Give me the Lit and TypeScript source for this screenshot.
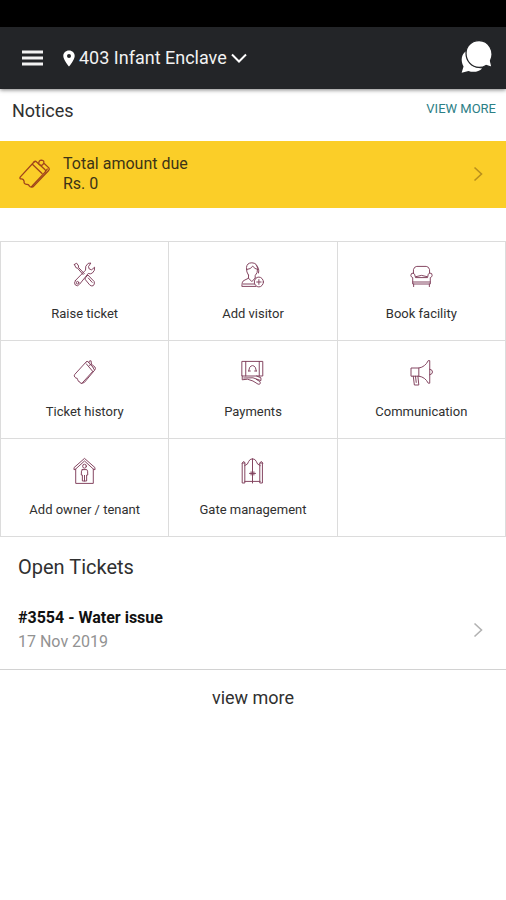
import { LitElement, html, css, svg } from "lit";
import { customElement } from "lit/decorators.js";

const ticket = svg`
  <path d="M13.6 2.8 L2 15.4 Q1.2 16.6 2.2 17.2 Q4.6 16.8 5.2 19.2 Q4.8 21.4 7.2 21.8 Q9 21.4 9.8 23.4 Q10.6 24.6 11.8 23.4 L23.2 11.2"/>
  <path d="M13.6 2.8 Q14.6 1.6 15.8 2.8 L22.8 9.2 Q24 10.4 23.2 11.2 M12.4 5 L20.4 12.6"/>
  <path d="M17.6 4.4 Q17.4 1.2 20 1.2 Q22.6 1.6 21.8 4 Q20.6 6.2 18.8 5.4 M22 3.8 L26.2 7.8 Q27 9 26 10 L13.4 23.2 Q12.6 24.2 11.4 24 M24.8 8.8 L23.6 10.4"/>`;

const steepTicket = svg`
  <path d="M15.4 2.8 L3 15.4 Q1.6 17 3.2 18.2 L4.2 19 Q6 18.8 6.2 20.8 L7 22.4 Q8.4 22.2 9 24 Q10 25 11.2 23.8 L22.4 12.4"/>
  <path d="M15.4 2.8 Q16.4 1.8 17.4 2.8 L22.4 8 M15.4 4.8 L22.2 12.2"/>
  <path d="M18 3.6 Q18.4 1 20.6 1.8 L21 5.2 L24.8 8 Q26 9.4 24.6 11 L13.4 23.4 L10.4 24.4 M18.6 6.4 L21 5.2 M22.4 8 L24 10.6"/>`;

const tiles = [
  {
    label: "Raise ticket",
    icon: svg`
      <path d="M2.5 3.5 L5 2.2 L7.2 5 L6.8 6.2 L13.4 12.8 M2.5 3.5 L4.4 6.8 L5.8 7 L12 13.6"/>
      <path d="M15.2 16 L17.2 14 L24 20.6 Q24.8 23.2 22.8 24.8 Q20.6 25.4 19 23.8 L14.2 18.4Z M17.6 17 L21.8 21.4"/>
      <path d="M3.8 19.4 L14.6 9.2 Q13.8 4.8 17.4 2.4 L20.4 2 L17.8 5.6 L18.6 8 L21.2 8.8 L24.4 6.2 Q25 9.8 22 12 Q19.6 13.6 17.6 12.4 L8.4 23 Q6 26 3.6 24 Q1.6 22 3.8 19.4Z"/>
      <circle cx="6" cy="21.7" r="1.3"/>`,
  },
  {
    label: "Add visitor",
    icon: svg`
      <path d="M9 14 Q6.8 11.4 7 6.6 Q7.4 1.8 12.8 1.8 Q18.6 2 19 7.4 Q19.2 12 16.4 14.6 V17"/>
      <path d="M7.2 8.6 Q11.6 8.2 13.8 5.2 Q16 8.2 19 8.4 M17.4 4.4 Q21.4 7 20 12"/>
      <path d="M9.2 14 V17.2 L3.6 19.8 Q2 21 2 25.4 H17 M9.2 17.2 L12.8 20.6 L16.4 17 M3.6 23 H15.6"/>
      <circle cx="20.4" cy="21" r="4.9"/>
      <path d="M20.4 18.6 V23.4 M18 21 H22.8"/>`,
  },
  {
    label: "Book facility",
    icon: svg`
      <path d="M4.8 12 V8.6 Q5.6 5.6 8.4 5.4 H18.6 Q21.4 5.6 22.2 8.6 V12"/>
      <path d="M4.8 12 Q1.8 11.8 2 14.4 Q2.2 16.2 4 16.6 V23 H23 V16.6 Q24.8 16.2 25 14.4 Q25.2 11.8 22.2 12 Q20.6 12.2 20 16.6 H7 Q6.4 12.2 4.8 12Z"/>
      <path d="M7.4 15.6 Q13.5 13 19.6 15.6 M4 21 H23 M5 23 V25.6 M22 23 V25.6"/>`,
  },
  { label: "Ticket history", icon: steepTicket },
  {
    label: "Payments",
    icon: svg`
      <path d="M2.4 2.4 H24.6 V17 H2.4Z M6.2 2.4 V17 M20.8 2.4 V17"/>
      <path d="M9.4 12 L10.4 8.4 Q13.5 4.8 16.6 8.4 L17.6 12 M9.4 12 H11.2 M15.8 12 H17.6"/>
      <path d="M2.4 17 V20.8 L8 20.2 L14 22 L19.6 25.2 Q22.8 25.6 21.6 22.6 L17.6 20.4 M4 19 L14 18.8 L22.6 21.6 V18.8 L18 17"/>`,
  },
  {
    label: "Communication",
    icon: svg`
      <path d="M2.6 9 H10.6 Q17.4 8 20.8 1.6 H22.4 V24.2 H20.8 Q17.4 18 10.6 17.2 H2.6Z"/>
      <path d="M10.6 9 V17.2 M22.4 10.2 Q25.4 10.6 25.4 13 Q25.2 15.4 22.4 15.8"/>
      <path d="M4.6 17.2 L5.8 26 H10.6 L9.6 17.2 M7 17.2 L7.8 23.4"/>`,
  },
  {
    label: "Add owner / tenant",
    icon: svg`
      <path d="M4 26 V12 L2.2 12.8 V10.6 L13.5 1.4 L24.8 10.6 V12.8 L23 12 V26Z M4 12 L13.5 4 L23 12"/>
      <circle cx="13.5" cy="9.2" r="2"/>
      <path d="M11 12.6 H16 Q17.2 13 17 18 H15.8 V24 H11.2 V18 H10 Q9.8 13 11 12.6Z M13.5 18.4 V24"/>`,
  },
  {
    label: "Gate management",
    icon: svg`
      <path d="M2.8 6 H5.2 V26 H2.8Z M21.8 6 H24.2 V26 H21.8Z M2.4 6 L4 4.4 L5.6 6 M21.4 6 L23 4.4 L24.6 6"/>
      <path d="M5.2 8.6 Q8.8 7.6 9.4 4.4 Q10.4 2 13.5 1.8 Q16.6 2 17.6 4.4 Q18.2 7.6 21.8 8.6 M13.5 1.8 V26 M5.2 24.4 H21.8"/>
      <path d="M10.2 16.4 H16.8 M12 14.8 V18 M15 14.8 V18"/>`,
  },
];

@customElement("app-root")
export class AppRoot extends LitElement {
  static styles = css`
    :host {
      display: block;
      min-height: 100vh;
      background: #fff;
      color: #303030;
      font-family: Roboto, "Liberation Sans", sans-serif;
    }
    * {
      box-sizing: border-box;
    }
    button {
      display: flex;
      align-items: center;
      padding: 0;
      border: 0;
      background: none;
      color: inherit;
      font: inherit;
      text-align: left;
      cursor: pointer;
    }
    svg {
      display: block;
      flex: none;
    }
    a {
      color: inherit;
      text-decoration: none;
    }
    h2,
    p {
      margin: 0;
      font-weight: 400;
    }
    .status {
      height: 27px;
      background: #000;
    }
    .bar {
      display: flex;
      align-items: center;
      height: 62px;
      padding: 0 12px 0 22px;
      background: #232528;
      color: #f2f2f2;
      box-shadow: 0 1px 4px rgba(0, 0, 0, 0.5);
    }
    .place {
      gap: 4px;
      margin-left: 20px;
      font-size: 18px;
      line-height: 24px;
    }
    .chat {
      margin-left: auto;
    }
    .notices {
      display: flex;
      justify-content: space-between;
      padding: 9px 10px 17px 12px;
      line-height: 26px;
    }
    .notices h2 {
      font-size: 18px;
    }
    .notices a {
      color: #2c8086;
      font-size: 13px;
      line-height: 22px;
    }
    .due {
      width: 100%;
      height: 67px;
      padding: 0 21px 2px 18px;
      background: #fbce28;
      color: #3d3416;
      font-size: 16px;
      line-height: 20px;
    }
    .due .text {
      flex: 1;
      margin-left: 12px;
    }
    .due .text span {
      display: block;
    }
    .chev {
      color: #b98f1c;
    }
    .tiles {
      display: grid;
      grid-template-columns: repeat(3, 1fr);
      gap: 1px;
      margin-top: 33px;
      padding: 1px;
      background: #dcdcdc;
    }
    .tile {
      flex-direction: column;
      gap: 17px;
      height: 98px;
      padding-top: 19px;
      background: #fff;
      font-size: 13px;
      line-height: 18px;
    }
    .tile:nth-child(n + 4) {
      height: 97px;
      padding-top: 18px;
    }
    .line {
      fill: none;
      stroke: #80405c;
      stroke-linejoin: round;
      stroke-linecap: round;
    }
    .due .line {
      stroke: #a0441c;
    }
    .open h2 {
      padding: 16px 18px;
      font-size: 20px;
      line-height: 28px;
    }
    .issue {
      justify-content: space-between;
      width: 100%;
      padding: 9px 21px 15px 18px;
      border-bottom: 1px solid #d2d2d2;
      font-size: 16px;
      line-height: 24px;
    }
    .issue strong {
      display: block;
      color: #111;
      font-weight: 700;
    }
    .issue time {
      display: block;
      color: #929292;
    }
    .issue .chev {
      color: #b2b2b2;
    }
    .more {
      margin: 16px auto;
      font-size: 18px;
      line-height: 24px;
    }
  `;

  private chevron() {
    return html`<svg class="chev" width="14" height="18" viewBox="0 0 14 18" fill="none" stroke="currentColor" stroke-width="1.6" aria-hidden="true">
      <path d="M3.5 2.5 L10.5 9 L3.5 15.5" />
    </svg>`;
  }

  render() {
    return html`
      <div class="status"></div>
      <header class="bar">
        <button aria-label="Menu">
          <svg width="21" height="16" viewBox="0 0 21 16" fill="currentColor">
            <path d="M0 0.5H21V3.5H0Z M0 6.5H21V9.5H0Z M0 12.5H21V15.5H0Z" />
          </svg>
        </button>
        <button class="place">
          <svg width="12" height="17" viewBox="0 0 12 17" fill="#fff" aria-hidden="true">
            <path fill-rule="evenodd" d="M6 0.5 C2.7 0.5 0.3 2.9 0.3 6 C0.3 10 6 16.5 6 16.5 C6 16.5 11.7 10 11.7 6 C11.7 2.9 9.3 0.5 6 0.5Z M6 4 A2 2 0 1 1 6 8 A2 2 0 1 1 6 4Z" />
          </svg>
          <span>403 Infant Enclave</span>
          <svg width="16" height="10" viewBox="0 0 16 10" fill="none" stroke="#fff" stroke-width="2" aria-hidden="true">
            <path d="M1 1.5 L8 8.5 L15 1.5" />
          </svg>
        </button>
        <button class="chat" aria-label="Messages">
          <svg width="34" height="36" viewBox="0 0 34 38" fill="#fff">
            <path d="M5.4 12 C0.6 15 -0.6 22 2.8 28 L0.8 34.6 L8 32.6 C13 34.6 19 33.6 22.4 30 C12 30 5 23 5.4 12Z" />
            <path d="M19.2 0.6 C11.2 0.6 5.4 6.4 5.4 14 C5.4 22 11.2 29 19.2 29 C22 29 24.6 28.2 26.6 26.8 L32.8 28.8 L31.2 22 C36 12 29.4 0.6 19.2 0.6Z" stroke="#232528" stroke-width="1.3" />
          </svg>
        </button>
      </header>
      <main>
        <section class="notices">
          <h2>Notices</h2>
          <a href="#notices">VIEW MORE</a>
        </section>
        <button class="due">
          <svg class="line" width="33" height="32" viewBox="0 0 28 26" stroke-width="1.1" aria-hidden="true">${ticket}</svg>
          <span class="text"><span>Total amount due</span><span>Rs. 0</span></span>
          ${this.chevron()}
        </button>
        <nav class="tiles">
          ${tiles.map(
            (t) => html`<button class="tile">
              <svg class="line" width="25" height="27" viewBox="0 0 27 27" preserveAspectRatio="none" stroke-width="1" aria-hidden="true">${t.icon}</svg>
              <span>${t.label}</span>
            </button>`
          )}
          <div class="tile"></div>
        </nav>
        <section class="open">
          <h2>Open Tickets</h2>
          <button class="issue">
            <span><strong>#3554 - Water issue</strong><time datetime="2019-11-17">17 Nov 2019</time></span>
            ${this.chevron()}
          </button>
          <button class="more">view more</button>
        </section>
      </main>
    `;
  }
}
